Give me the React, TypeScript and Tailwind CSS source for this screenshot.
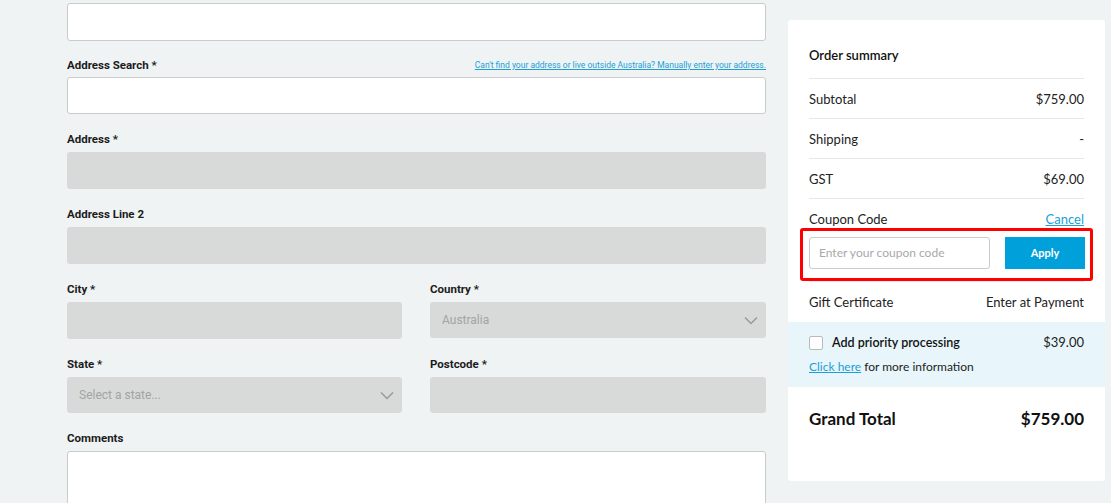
import React from "react";

const labelFont = { fontFamily: '"Liberation Sans Narrow", "Roboto", sans-serif' };

function Label({ children }: { children: React.ReactNode }) {
  return (
    <div className="text-[11.5px] font-bold text-[#1c1c1c] leading-[14px] h-[14px]" style={labelFont}>
      {children}
    </div>
  );
}

function Chevron() {
  return (
    <svg width="14" height="9" viewBox="0 0 14 9" className="text-[#9a9a9a]">
      <path d="M1 1.5 L7 7.5 L13 1.5" fill="none" stroke="currentColor" strokeWidth="1.5" />
    </svg>
  );
}

function Row({ left, right }: { left: React.ReactNode; right: React.ReactNode }) {
  return (
    <div className="flex items-center justify-between h-[40px] pt-[2px] text-[13px] text-[#222] border-b border-[#e6e8e9]">
      <span>{left}</span>
      <span>{right}</span>
    </div>
  );
}

export default function App() {
  return (
    <div className="w-[1111px] h-[503px] overflow-hidden bg-[#f0f3f4] flex items-start" style={{ fontFamily: 'Lato, "Open Sans", sans-serif' }}>
      {/* Left form */}
      <div className="w-[699px] ml-[67px] pt-[3px] shrink-0">
        <div className="h-[38px] bg-white border border-[#c9cbcc] rounded-[3px]" />

        <div className="mt-[17px] flex items-end justify-between">
          <Label>Address Search *</Label>
          <a className="text-[8.5px] text-[#1a9fd6] underline leading-[11px] mb-[1px]" style={labelFont}>
            Can't find your address or live outside Australia? Manually enter your address.
          </a>
        </div>
        <div className="mt-[5px] h-[37px] bg-white border border-[#c9cbcc] rounded-[3px]" />

        <div className="mt-[18px]"><Label>Address *</Label></div>
        <div className="mt-[6px] h-[37px] bg-[#d8d9d9] rounded-[3px]" />

        <div className="mt-[18px]"><Label>Address Line 2</Label></div>
        <div className="mt-[6px] h-[37px] bg-[#d8d9d9] rounded-[3px]" />

        <div className="mt-[18px] grid grid-cols-[335px_336px] gap-x-[28px]">
          <div>
            <Label>City *</Label>
            <div className="mt-[6px] h-[37px] bg-[#d8d9d9] rounded-[3px]" />
          </div>
          <div>
            <Label>Country *</Label>
            <div className="mt-[6px] h-[36px] bg-[#d8d9d9] rounded-[3px] flex items-center justify-between pl-[12px] pr-[8px]">
              <span className="text-[12px] text-[#a3a4a4]" style={labelFont}>Australia</span>
              <Chevron />
            </div>
          </div>
        </div>

        <div className="mt-[18px] grid grid-cols-[335px_336px] gap-x-[28px]">
          <div>
            <Label>State *</Label>
            <div className="mt-[6px] h-[36px] bg-[#d8d9d9] rounded-[3px] flex items-center justify-between pl-[12px] pr-[8px]">
              <span className="text-[12px] text-[#a3a4a4]" style={labelFont}>Select a state...</span>
              <Chevron />
            </div>
          </div>
          <div>
            <Label>Postcode *</Label>
            <div className="mt-[6px] h-[36px] bg-[#d8d9d9] rounded-[3px]" />
          </div>
        </div>

        <div className="mt-[18px]"><Label>Comments</Label></div>
        <div className="mt-[6px] h-[80px] bg-white border border-[#c9cbcc] rounded-[3px]" />
      </div>

      {/* Right summary */}
      <div className="ml-[22px] mt-[20px] w-[317px] h-[461px] shrink-0 bg-white rounded-[3px]">
        <div className="px-[21px]">
          <div className="h-[59px] flex items-center pt-[14px] border-b border-[#e6e8e9] text-[13px] font-semibold text-[#111]">
            Order summary
          </div>
          <Row left="Subtotal" right="$759.00" />
          <Row left="Shipping" right="-" />
          <Row left="GST" right="$69.00" />
          <div className="flex items-center justify-between h-[29px] pt-[12px] text-[13px] text-[#222]">
            <span>Coupon Code</span>
            <a className="text-[#1a9fd6] underline">Cancel</a>
          </div>
        </div>
        <div className="mx-[12px] h-[53px] border-[3px] border-[#ff0000] rounded-[3px] flex items-start pt-[6px] pl-[6px] pr-[4px] gap-[15px]">
          <div className="w-[181px] h-[32px] border border-[#c9cbcc] rounded-[3px] flex items-center px-[9px] text-[12px] text-[#a7a9aa]">
            Enter your coupon code
          </div>
          <div className="w-[80px] h-[32px] bg-[#00a0da] flex items-center justify-center text-[11px] font-bold text-white">
            Apply
          </div>
        </div>
        <div className="px-[21px]">
          <div className="border-t border-[#e6e8e9]" />
          <div className="flex items-center justify-between h-[40px] pt-[2px] text-[13px] text-[#222]">
            <span>Gift Certificate</span>
            <span>Enter at Payment</span>
          </div>
        </div>
        <div className="bg-[#e8f6fb] h-[65px] px-[21px] pt-[12px]">
          <div className="flex items-center justify-between h-[18px]">
            <div className="flex items-center gap-[9px]">
              <div className="w-[14px] h-[14px] bg-white border border-[#b9bbbc] rounded-[2px]" />
              <span className="text-[12.5px] font-semibold text-[#111]">Add priority processing</span>
            </div>
            <span className="text-[13px] text-[#222]">$39.00</span>
          </div>
          <div className="mt-[7px] text-[12px] leading-[16px] text-[#222]">
            <a className="text-[#1a9fd6] underline">Click here</a> for more information
          </div>
        </div>
        <div className="px-[21px] h-[63px] pt-[1px] flex items-center justify-between text-[17px] font-bold text-[#111]">
          <span>Grand Total</span>
          <span>$759.00</span>
        </div>
      </div>
    </div>
  );
}
